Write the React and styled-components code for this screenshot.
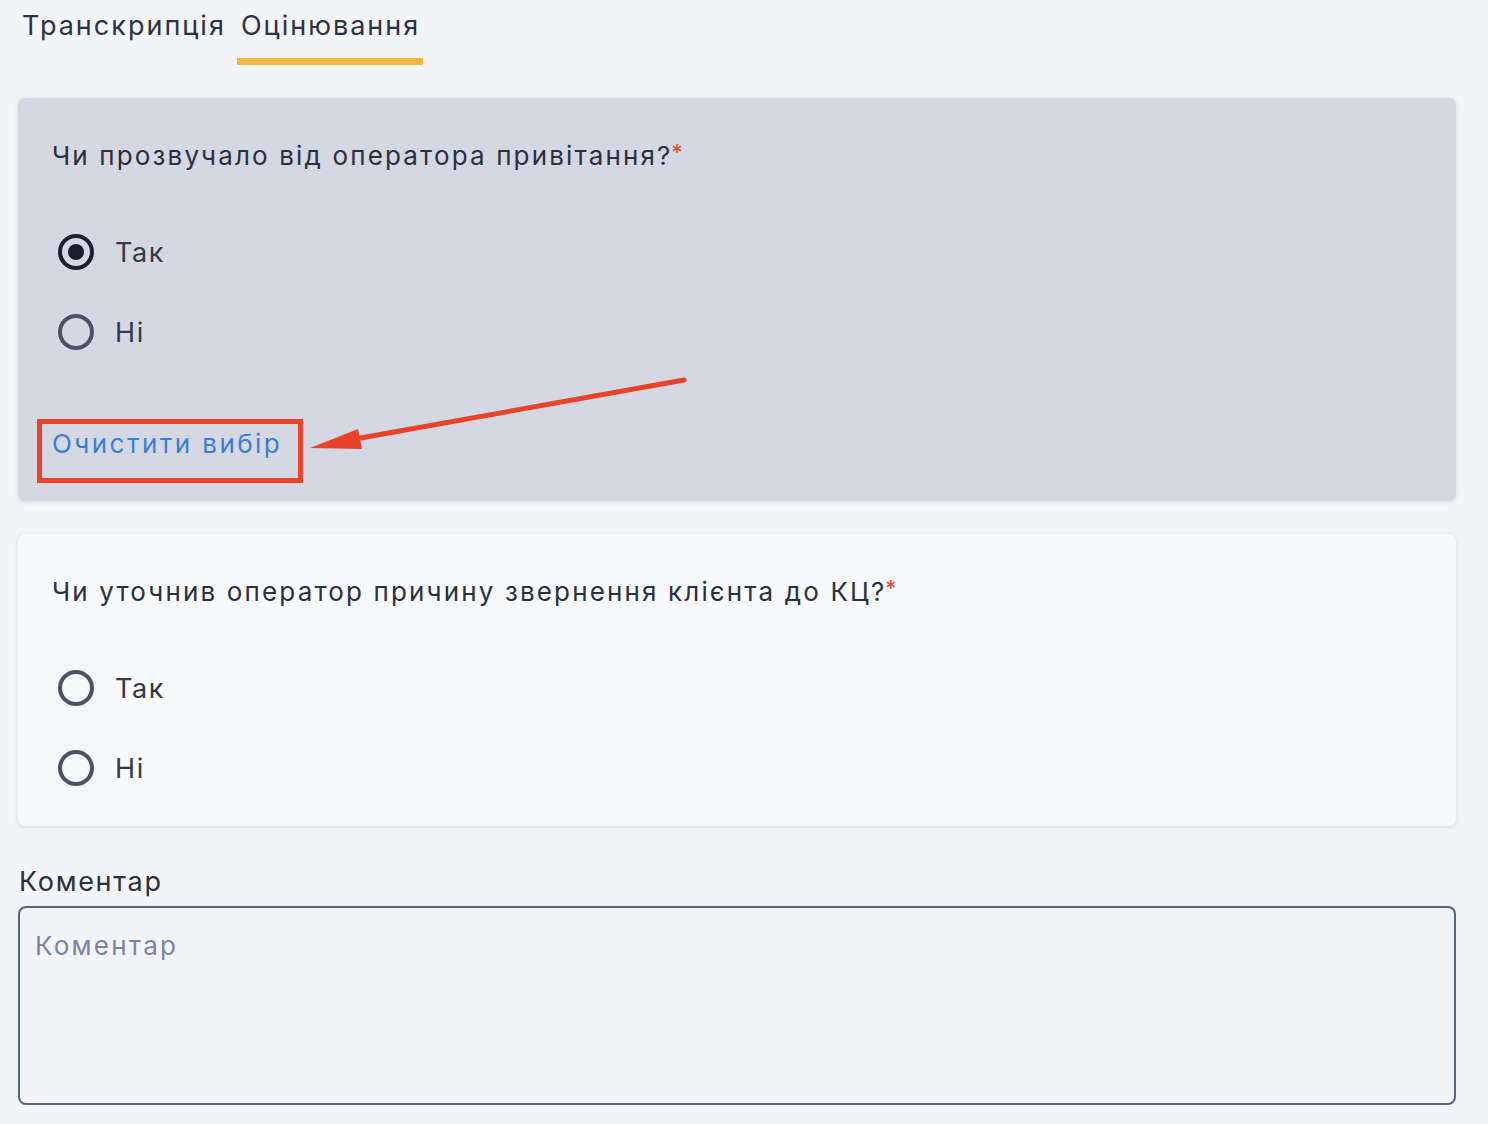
import React from "react";
import styled, { createGlobalStyle } from "styled-components";

const Global = createGlobalStyle`
  html, body { margin: 0; padding: 0; background: #f3f4f7; }
  body { font-family: "Inter", "Noto Sans", sans-serif; color: #2b3040; }
  * { box-sizing: border-box; }
`;

const Page = styled.div`
  position: relative;
  width: 1488px;
  min-height: 1124px;
  padding: 0 32px 0 18px;
`;

const Tabs = styled.div`
  display: flex;
  gap: 8px;
  height: 66px;
`;

const Tab = styled.div`
  position: relative;
  padding: 8px 3px 0 4px;
  font-size: 27px;
  line-height: 36px;
  letter-spacing: 2px;
  color: #2c3143;
  &::after {
    content: "";
    position: absolute;
    left: 0;
    right: 0;
    bottom: 1px;
    height: 7px;
    background: ${(p) => (p.$active ? "#f2b73e" : "transparent")};
  }
`;

const Card = styled.section`
  margin-top: ${(p) => p.$mt}px;
  background: ${(p) => (p.$active ? "#d5d8e2" : "#f8f9fb")};
  border-radius: 7px;
  box-shadow: 0 1px 4px rgba(40, 45, 70, 0.14);
  padding: 40px 34px 32px;
`;

const Question = styled.div`
  font-size: 26px;
  line-height: 36px;
  letter-spacing: 2.15px;
  color: #2b2f3f;
`;

const Star = styled.span`
  color: #e8473a;
  font-size: 22px;
  vertical-align: top;
  line-height: 28px;
  letter-spacing: 0;
  margin-left: -1px;
`;

const Options = styled.div`
  display: flex;
  flex-direction: column;
  gap: 28px;
  margin-top: 52px;
`;

const Option = styled.label`
  display: flex;
  align-items: center;
  gap: 21px;
  height: 52px;
  padding-left: 6px;
  font-size: 27px;
  letter-spacing: 1.6px;
  color: #33384a;
  cursor: pointer;
`;

const Radio = styled.span`
  width: 36px;
  height: 36px;
  border-radius: 50%;
  border: 4px solid ${(p) => (p.$checked ? "#1c1f2e" : "#4a5069")};
  display: flex;
  align-items: center;
  justify-content: center;
  flex-shrink: 0;
  &::after {
    content: "";
    width: 16px;
    height: 16px;
    border-radius: 50%;
    background: ${(p) => (p.$checked ? "#1c1f2e" : "transparent")};
  }
`;

const ClearLink = styled.a`
  display: block;
  margin-top: 68px;
  margin-bottom: 7px;
  font-size: 26px;
  line-height: 36px;
  letter-spacing: 2.45px;
  color: #3a7fd6;
  text-decoration: none;
  cursor: pointer;
`;

const FieldLabel = styled.div`
  margin-top: 40px;
  padding-left: 1px;
  font-size: 27px;
  line-height: 32px;
  letter-spacing: 1.7px;
  color: #2b2f3f;
`;

const TextArea = styled.textarea`
  display: block;
  width: 100%;
  height: 199px;
  margin-top: 8px;
  border: 2px solid #5a6283;
  border-radius: 8px;
  background: #f3f4f7;
  padding: 22px 15px;
  font-family: "Inter", "Noto Sans", sans-serif;
  font-size: 26px;
  line-height: 32px;
  letter-spacing: 2.25px;
  color: #2b2f3f;
  resize: none;
  outline: none;
  &::placeholder { color: #7a85a6; }
`;

const Overlay = styled.svg`
  position: absolute;
  top: 0;
  left: 0;
  pointer-events: none;
`;

function QuestionCard({ title, checked, active, mt, children }) {
  return (
    <Card $active={active} $mt={mt}>
      <Question>
        {title}
        <Star>*</Star>
      </Question>
      <Options>
        <Option>
          <Radio $checked={checked === "yes"} />
          Так
        </Option>
        <Option>
          <Radio $checked={checked === "no"} />
          Ні
        </Option>
      </Options>
      {children}
    </Card>
  );
}

export default function App() {
  return (
    <>
      <Global />
      <Page>
        <Tabs>
          <Tab>Транскрипція</Tab>
          <Tab $active>Оцінювання</Tab>
        </Tabs>
        <QuestionCard title="Чи прозвучало від оператора привітання?" checked="yes" active mt={32}>
          <ClearLink>Очистити вибір</ClearLink>
        </QuestionCard>
        <QuestionCard title="Чи уточнив оператор причину звернення клієнта до КЦ?" mt={33} />
        <FieldLabel>Коментар</FieldLabel>
        <TextArea placeholder="Коментар" />
        <Overlay width="1488" height="1124" viewBox="0 0 1488 1124">
          <rect x="39.5" y="421.5" width="261" height="59" fill="none" stroke="#e9432a" strokeWidth="5" />
          <line x1="684" y1="380" x2="355" y2="439" stroke="#e9432a" strokeWidth="5" strokeLinecap="round" />
          <polygon points="310,448 358,429 362,449" fill="#e9432a" />
        </Overlay>
      </Page>
    </>
  );
}
